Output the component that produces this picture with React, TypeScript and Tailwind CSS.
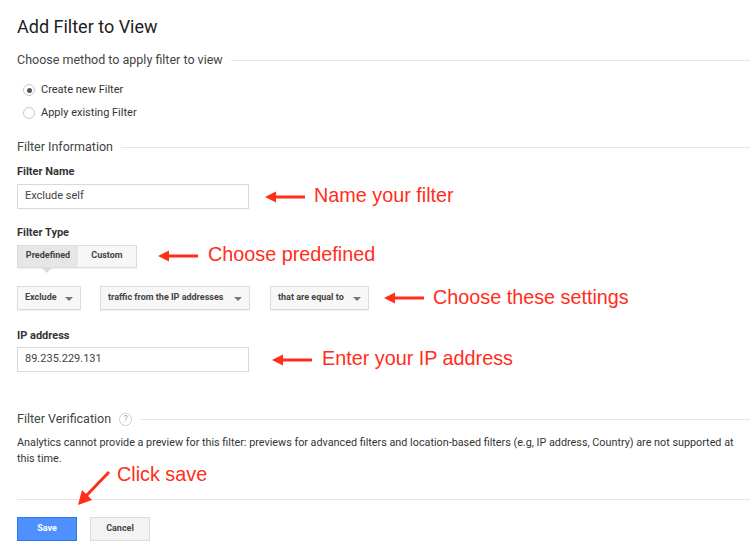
import { useState } from "react";

function LeftArrow({ className = "" }: { className?: string }) {
  return (
    <svg width="40" height="12" viewBox="0 0 40 12" className={className}>
      <rect x="9" y="4.5" width="31" height="3" fill="#ff2d1a" />
      <polygon points="0,6 11,0.5 11,11.5" fill="#ff2d1a" />
    </svg>
  );
}

function Note({ children }: { children: React.ReactNode }) {
  return (
    <span className="text-[19.8px] leading-none text-[#ff2d1a] [font-family:'Liberation_Sans',Arial,sans-serif]">
      {children}
    </span>
  );
}

function Caret() {
  return <span className="ml-auto border-x-[4px] border-t-[4px] border-x-transparent border-t-[#777] mt-[2px]" />;
}

function Section({ title, help = false }: { title: string; help?: boolean }) {
  return (
    <div className="flex items-center gap-2 h-[18px]">
      <span className="text-[12.5px] text-[#444]">{title}</span>
      {help && (
        <span className="w-[13px] h-[13px] rounded-full border border-[#ccc] text-[9px] leading-none text-[#aaa] flex items-center justify-center">
          ?
        </span>
      )}
      <div className="flex-1 h-px bg-[#e5e5e5]" />
    </div>
  );
}

export default function App() {
  const [method, setMethod] = useState("new");
  const [type, setType] = useState("predefined");

  return (
    <div className="w-[750px] h-[549px] bg-white overflow-hidden pl-[17px] [font-family:Roboto,'Liberation_Sans',sans-serif] text-[#333]">
      <h1 className="pt-[15px] text-[18px] leading-[24px] text-[#222]">Add Filter to View</h1>

      <div className="mt-[12px]">
        <Section title="Choose method to apply filter to view" />
      </div>

      <div className="mt-[13px] ml-[6px] flex flex-col gap-[7px] text-[11px] text-[#333]">
        {[
          ["new", "Create new Filter"],
          ["existing", "Apply existing Filter"],
        ].map(([key, label]) => (
          <label key={key} className="flex items-center gap-[6px] h-[16px] cursor-pointer" onClick={() => setMethod(key)}>
            <span className="w-[12px] h-[12px] rounded-full border border-[#c8c8c8] bg-white flex items-center justify-center">
              {method === key && <span className="w-[5px] h-[5px] rounded-full bg-[#555]" />}
            </span>
            {label}
          </label>
        ))}
      </div>

      <div className="mt-[17px]">
        <Section title="Filter Information" />
      </div>

      <div className="mt-[9px] text-[11px] leading-[14px] font-bold text-[#333]">Filter Name</div>
      <div className="mt-[5px] flex items-center">
        <div className="w-[232px] h-[25px] border border-[#d9d9d9] px-[7px] flex items-center text-[11px] text-[#444]">
          Exclude self
        </div>
        <LeftArrow className="ml-[16px]" />
        <span className="ml-[9px]"><Note>Name your filter</Note></span>
      </div>

      <div className="mt-[17px] text-[11px] leading-[14px] font-bold text-[#333]">Filter Type</div>
      <div className="mt-[4px] flex items-center">
        <div className="relative flex h-[23px] border border-[#dcdcdc] shadow-[0_1px_1px_rgba(0,0,0,0.05)] text-[9px] font-bold text-[#444]">
          <button
            onClick={() => setType("predefined")}
            className={`w-[60px] ${type === "predefined" ? "bg-[#e6e6e6]" : "bg-[#f7f7f7]"}`}
          >
            Predefined
          </button>
          <button
            onClick={() => setType("custom")}
            className={`w-[58px] ${type === "custom" ? "bg-[#e6e6e6]" : "bg-[#f7f7f7]"}`}
          >
            Custom
          </button>
          <span className="absolute left-[24px] top-[22px] border-x-[5px] border-t-[5px] border-x-transparent border-t-[#dcdcdc]" />
        </div>
        <LeftArrow className="ml-[21px]" />
        <span className="ml-[10px]"><Note>Choose predefined</Note></span>
      </div>

      <div className="mt-[18px] flex items-center text-[9px] font-bold text-[#444]">
        <div className="w-[64px] h-[24px] border border-[#dcdcdc] bg-[#f7f7f7] shadow-[0_1px_1px_rgba(0,0,0,0.06)] flex items-center px-[7px] gap-1">
          Exclude <Caret />
        </div>
        <div className="ml-[19px] w-[150px] h-[24px] border border-[#dcdcdc] bg-[#f7f7f7] shadow-[0_1px_1px_rgba(0,0,0,0.06)] flex items-center px-[7px]">
          traffic from the IP addresses <Caret />
        </div>
        <div className="ml-[20px] w-[99px] h-[24px] border border-[#dcdcdc] bg-[#f7f7f7] shadow-[0_1px_1px_rgba(0,0,0,0.06)] flex items-center px-[7px]">
          that are equal to <Caret />
        </div>
        <LeftArrow className="ml-[15px]" />
        <span className="ml-[9px] font-normal"><Note>Choose these settings</Note></span>
      </div>

      <div className="mt-[19px] text-[11px] leading-[14px] font-bold text-[#333]">IP address</div>
      <div className="mt-[4px] flex items-center">
        <div className="w-[232px] h-[25px] border border-[#d9d9d9] px-[7px] flex items-center text-[11px] text-[#444]">
          89.235.229.131
        </div>
        <LeftArrow className="ml-[23px]" />
        <span className="ml-[10px]"><Note>Enter your IP address</Note></span>
      </div>

      <div className="mt-[38px]">
        <Section title="Filter Verification" help />
      </div>

      <p className="mt-[7px] pr-[3px] text-[10.8px] leading-[16px] text-[#333]">
        Analytics cannot provide a preview for this filter: previews for advanced filters and location-based filters (e.g, IP address, Country) are not supported at this time.
      </p>

      <div className="relative h-[32px]">
        <svg width="40" height="38" viewBox="0 0 40 38" className="absolute left-[59px] top-[2px]">
          <line x1="33" y1="3" x2="10" y2="27" stroke="#ff2d1a" strokeWidth="3" />
          <polygon points="2,36 6,21 16,31" fill="#ff2d1a" />
        </svg>
        <span className="absolute left-[100px] top-[-3px]"><Note>Click save</Note></span>
      </div>

      <div className="h-px bg-[#e5e5e5]" />

      <div className="mt-[17px] flex gap-[13px] text-[9px] font-bold">
        <button className="w-[60px] h-[24px] bg-[#4d90fe] border border-[#3079ed] text-white">Save</button>
        <button className="w-[60px] h-[24px] bg-[#f3f3f3] border border-[#dcdcdc] text-[#444]">Cancel</button>
      </div>
    </div>
  );
}
